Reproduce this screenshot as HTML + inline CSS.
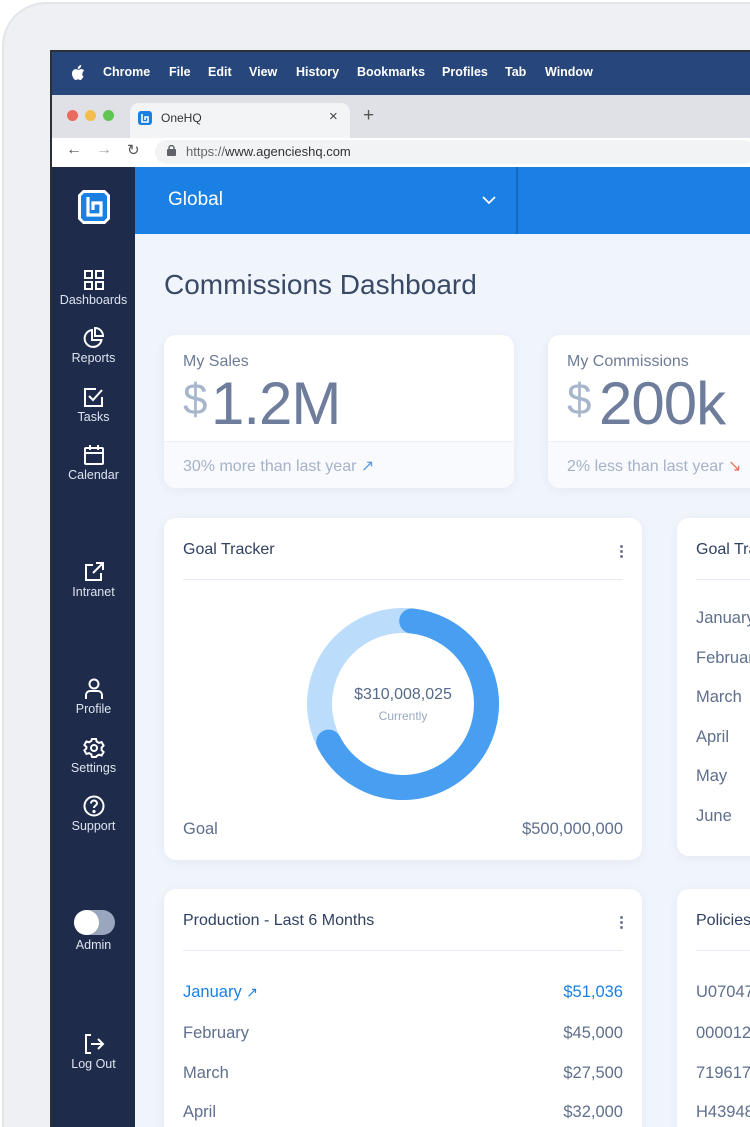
<!DOCTYPE html>
<html><head><meta charset="utf-8"><style>
*{margin:0;padding:0;box-sizing:border-box}
html,body{width:750px;height:1127px;overflow:hidden}
body{background:#fff;font-family:"Liberation Sans",sans-serif;position:relative}
#w{position:absolute;left:0;top:0;width:750px;height:1127px;overflow:hidden}
.a{position:absolute}
.frame{left:2px;top:2px;width:800px;height:1200px;border:2px solid #e3e5e9;border-radius:44px;background:#eef0f3}
.bezel{left:50px;top:50px;width:760px;height:1100px;background:#2b2f36}
.menu{left:52px;top:52px;width:698px;height:43px;background:#27467c;color:#fff;font-size:12.5px;font-weight:bold}
.menu span{position:absolute;top:13px}
.tabs{left:52px;top:95px;width:698px;height:43px;background:#dfe1e6}
.tab{left:130px;top:103px;width:220px;height:35px;background:#f3f4f6;border-radius:9px 9px 0 0}
.addr{left:52px;top:138px;width:698px;height:29px;background:#fff}
.url{left:155px;top:140px;width:600px;height:24px;background:#f1f3f4;border-radius:12px}
.side{left:52px;top:167px;width:83px;height:960px;background:#1e2b4b}
.si{position:absolute;left:0;width:83px;text-align:center;color:#dde3ef;font-size:12.5px}
.si svg{display:block;margin:0 auto 2px}
.head{left:135px;top:167px;width:615px;height:67px;background:#1a80e4}
.main{left:135px;top:234px;width:615px;height:893px;background:#f0f4fb;overflow:hidden}
.card{position:absolute;background:#fff;border-radius:12px;box-shadow:0 2px 10px rgba(40,60,110,.06)}
.ct{position:absolute;left:19px;top:23px;font-size:16px;color:#2f4060}
.hr{position:absolute;left:19px;right:19px;top:61px;height:1px;background:#e6eaf2}
.dots{position:absolute;right:19px;top:27px;width:3px}
.dots i{display:block;width:3px;height:3px;border-radius:50%;background:#6d7a93;margin-bottom:2px}
.row{position:absolute;left:19px;right:19px;font-size:16.5px;color:#5f6f8d}
.row b{font-weight:normal;position:absolute;right:0}
</style></head><body><div id="w">
<div class="a frame"></div>
<div class="a bezel"></div>
<div class="a menu">
<svg class="a" style="left:19px;top:13px" width="14" height="16" viewBox="0 0 14 16"><path fill="#fff" d="M11.5 8.5c0-2 1.6-2.8 1.7-2.9-1-1.4-2.4-1.5-2.9-1.5-1.2-.1-2.4.7-3 .7-.6 0-1.6-.7-2.6-.7C3.3 4.1 1 5.3 1 8.6 1 11.5 3.2 15 4.6 15c.8 0 1.3-.6 2.4-.6 1.1 0 1.4.6 2.4.6 1.4 0 2.7-2.7 3.1-3.7-1.9-.8-1-2.8-1-2.8zM9.3 2.8C9.9 2.1 10.3 1.1 10.2 0c-.9.1-2 .6-2.6 1.4-.6.6-1 1.6-.9 2.6 1 .1 2-.5 2.6-1.2z"/></svg>
<span style="left:51px">Chrome</span><span style="left:117px">File</span><span style="left:156px">Edit</span><span style="left:197px">View</span><span style="left:244px">History</span><span style="left:305px">Bookmarks</span><span style="left:390px">Profiles</span><span style="left:453px">Tab</span><span style="left:493px">Window</span>
</div>
<div class="a tabs"></div>
<div class="a" style="left:67px;top:110px;width:11px;height:11px;border-radius:50%;background:#ec6a5e"></div>
<div class="a" style="left:85px;top:110px;width:11px;height:11px;border-radius:50%;background:#f4be4f"></div>
<div class="a" style="left:103px;top:110px;width:11px;height:11px;border-radius:50%;background:#61c554"></div>
<div class="a tab"></div>
<svg class="a" style="left:138px;top:111px" width="14" height="14" viewBox="0 0 14 14"><rect width="14" height="14" rx="3" fill="#1a80e4"/><path d="M4 3v8h6V6H7v3" stroke="#fff" stroke-width="1.6" fill="none"/></svg>
<div class="a" style="left:161px;top:111px;font-size:12px;color:#333">OneHQ</div>
<div class="a" style="left:329px;top:108px;font-size:15px;color:#444">×</div>
<div class="a" style="left:363px;top:105px;font-size:19px;color:#555">+</div>
<div class="a addr"></div>
<div class="a url"></div>
<div class="a" style="left:66px;top:141px;font-size:16px;color:#555">←</div>
<div class="a" style="left:96px;top:141px;font-size:16px;color:#aaa">→</div>
<div class="a" style="left:127px;top:141px;font-size:15px;color:#555">↻</div>
<svg class="a" style="left:167px;top:145px" width="9" height="11" viewBox="0 0 9 11"><rect y="4" width="9" height="7" rx="1" fill="#5f6368"/><path d="M2 5V3a2.5 2.5 0 015 0v2" stroke="#5f6368" stroke-width="1.4" fill="none"/></svg>
<div class="a" style="left:186px;top:144px;font-size:13px;color:#333"><span style="color:#666">https://</span>www.agencieshq.com</div>

<div class="a side">
<svg class="a" style="left:24px;top:21px" width="36" height="38" viewBox="0 0 36 38"><path d="M7 2h22l5 5v24l-5 5H7l-5-5V7z" fill="#fff"/><path d="M8 5h20l3 3v22l-3 3H8l-3-3V8z" fill="#1a80e4"/><path d="M12 9v18h13V15h-8v7" stroke="#fff" stroke-width="3.2" fill="none"/></svg>
<div class="si" style="top:102px"><svg width="22" height="22" viewBox="0 0 22 22" fill="none" stroke="#fff" stroke-width="2"><rect x="2" y="2" width="7" height="7"/><rect x="13" y="2" width="7" height="7"/><rect x="2" y="13" width="7" height="7"/><rect x="13" y="13" width="7" height="7"/></svg>Dashboards</div>
<div class="si" style="top:160px"><svg width="22" height="22" viewBox="0 0 22 22" fill="none" stroke="#fff" stroke-width="2"><path d="M9 3a8.5 8.5 0 109.5 10H9z"/><path d="M12 1v8h8a8 8 0 00-8-8z"/></svg>Reports</div>
<div class="si" style="top:219px"><svg width="22" height="22" viewBox="0 0 22 22" fill="none" stroke="#fff" stroke-width="2"><path d="M19 11v9H2V3h11"/><path d="M6 10l4 4 9-10"/></svg>Tasks</div>
<div class="si" style="top:277px"><svg width="22" height="22" viewBox="0 0 22 22" fill="none" stroke="#fff" stroke-width="2"><rect x="2" y="4" width="18" height="16" rx="1"/><path d="M2 9h18M7 1v5M15 1v5"/></svg>Calendar</div>
<div class="si" style="top:394px"><svg width="22" height="22" viewBox="0 0 22 22" fill="none" stroke="#fff" stroke-width="2"><path d="M10 4H3v15h15v-7"/><path d="M13 2h7v7M20 2L10 12"/></svg>Intranet</div>
<div class="si" style="top:511px"><svg width="22" height="22" viewBox="0 0 22 22" fill="none" stroke="#fff" stroke-width="2"><circle cx="11" cy="6" r="4.5"/><path d="M3 21v-4a4 4 0 014-4h8a4 4 0 014 4v4"/></svg>Profile</div>
<div class="si" style="top:570px"><svg width="22" height="22" viewBox="0 0 22 22" fill="none" stroke="#fff" stroke-width="2"><path d="M9 2h4l.7 2.6 2.3 1.3 2.6-.8 2 3.5-2 1.9v2.6l2 1.9-2 3.5-2.6-.8-2.3 1.3L13 20H9l-.7-2.6-2.3-1.3-2.6.8-2-3.5 2-1.9V9.9l-2-1.9 2-3.5 2.6.8 2.3-1.3z"/><circle cx="11" cy="11" r="3"/></svg>Settings</div>
<div class="si" style="top:628px"><svg width="22" height="22" viewBox="0 0 22 22" fill="none" stroke="#fff" stroke-width="2"><circle cx="11" cy="11" r="9.5"/><path d="M8 8.5a3 3 0 116 0c0 2-3 2-3 4.5"/><circle cx="11" cy="16.5" r=".6" fill="#fff"/></svg>Support</div>
<div class="a" style="left:22px;top:743px;width:41px;height:25px;border-radius:13px;background:#9aa6bd"></div>
<div class="a" style="left:22px;top:743px;width:25px;height:25px;border-radius:50%;background:#fff"></div>
<div class="si" style="top:771px">Admin</div>
<div class="si" style="top:866px"><svg width="22" height="22" viewBox="0 0 22 22" fill="none" stroke="#fff" stroke-width="2"><path d="M8 2H3v18h5"/><path d="M8 11h12M15 6l5 5-5 5"/></svg>Log Out</div>
</div>

<div class="a head">
<div class="a" style="left:33px;top:22px;font-size:19px;color:#fff">Global</div>
<svg class="a" style="left:347px;top:29px" width="14" height="9" viewBox="0 0 14 9"><path d="M1 1l6 6 6-6" stroke="#fff" stroke-width="1.8" fill="none"/></svg>
<div class="a" style="left:381px;top:0;width:2px;height:67px;background:#1567c0"></div>
</div>
<div class="a main">
<div class="a" style="left:29px;top:35px;font-size:28px;color:#3a4a66">Commissions Dashboard</div>

<div class="card" style="left:29px;top:101px;width:350px;height:153px;overflow:hidden">
<div class="a" style="left:19px;top:18px;font-size:16px;color:#6d7b96">My Sales</div>
<div class="a" style="left:19px;top:40px;font-size:44px;color:#a8b6cc">$</div>
<div class="a" style="left:47px;top:34px;font-size:60px;color:#6d7d9b;letter-spacing:-1px">1.2M</div>
<div class="a" style="left:0;top:106px;width:350px;height:47px;background:#f8fafd;border-top:1px solid #edf1f7"></div>
<div class="a" style="left:19px;top:121px;font-size:16px;color:#a5b2c8">30% more than last year <span style="color:#5b9ce8">↗</span></div>
</div>
<div class="card" style="left:413px;top:101px;width:350px;height:153px;overflow:hidden">
<div class="a" style="left:19px;top:18px;font-size:16px;color:#6d7b96">My Commissions</div>
<div class="a" style="left:19px;top:40px;font-size:44px;color:#a8b6cc">$</div>
<div class="a" style="left:51px;top:34px;font-size:60px;color:#6d7d9b;letter-spacing:-1px">200k</div>
<div class="a" style="left:0;top:106px;width:350px;height:47px;background:#f8fafd;border-top:1px solid #edf1f7"></div>
<div class="a" style="left:19px;top:121px;font-size:16px;color:#a5b2c8">2% less than last year <span style="color:#e5735f">↘</span></div>
</div>

<div class="card" style="left:29px;top:284px;width:478px;height:342px">
<div class="ct">Goal Tracker</div><div class="dots"><i></i><i></i><i></i></div><div class="hr"></div>
<svg class="a" style="left:143px;top:90px" width="192" height="192" viewBox="0 0 192 192">
<circle cx="96" cy="96" r="83.5" fill="none" stroke="#bcdcfc" stroke-width="25"/>
<circle cx="96" cy="96" r="83.5" fill="none" stroke="#489ef0" stroke-width="25" stroke-linecap="round" stroke-dasharray="345 600" transform="rotate(-84 96 96)"/>
</svg>
<div class="a" style="left:0;width:478px;text-align:center;top:168px;font-size:16px;color:#56698a">$310,008,025</div>
<div class="a" style="left:0;width:478px;text-align:center;top:191px;font-size:12px;color:#9aa8bf">Currently</div>
<div class="row" style="top:302px">Goal<b>$500,000,000</b></div>
</div>
<div class="card" style="left:542px;top:284px;width:300px;height:338px">
<div class="ct">Goal Tracker</div><div class="hr"></div>
<div class="row" style="top:91px">January</div>
<div class="row" style="top:131px">February</div>
<div class="row" style="top:170px">March</div>
<div class="row" style="top:210px">April</div>
<div class="row" style="top:249px">May</div>
<div class="row" style="top:289px">June</div>
</div>

<div class="card" style="left:29px;top:655px;width:478px;height:300px">
<div class="ct">Production - Last 6 Months</div><div class="dots"><i></i><i></i><i></i></div><div class="hr"></div>
<div class="row" style="top:94px;color:#1a80e4">January <span style="font-size:14px">↗</span><b>$51,036</b></div>
<div class="row" style="top:135px">February<b>$45,000</b></div>
<div class="row" style="top:175px">March<b>$27,500</b></div>
<div class="row" style="top:214px">April<b>$32,000</b></div>
</div>
<div class="card" style="left:542px;top:655px;width:300px;height:300px">
<div class="ct">Policies</div><div class="hr"></div>
<div class="row" style="top:94px">U070471</div>
<div class="row" style="top:135px">0000123</div>
<div class="row" style="top:175px">7196177</div>
<div class="row" style="top:214px">H439481</div>
</div>
</div>
</div></body></html>
